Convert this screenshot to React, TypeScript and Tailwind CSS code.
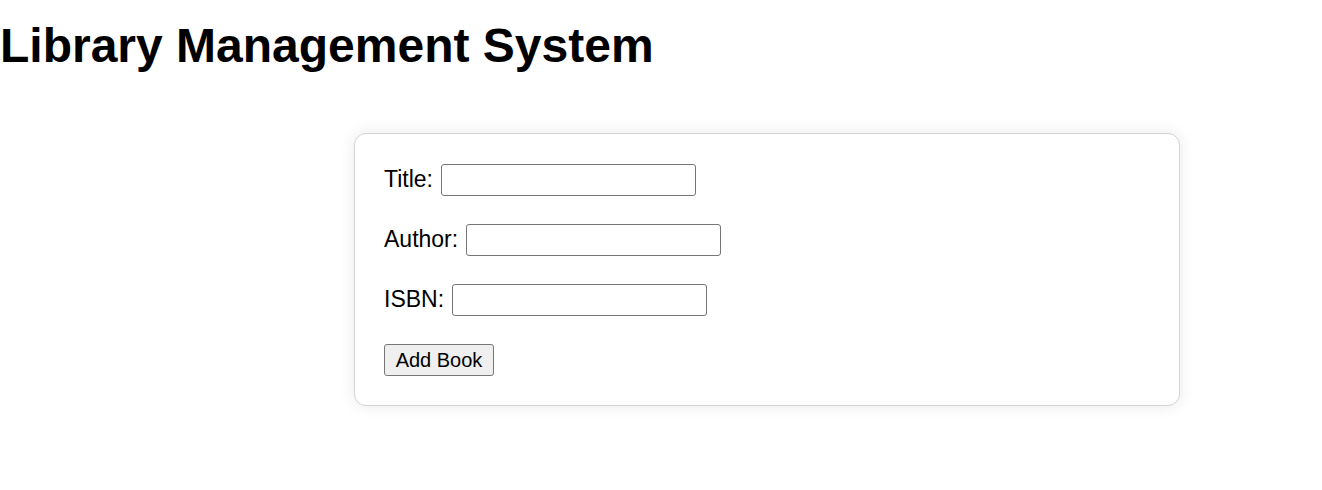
import { useState } from "react";

const fields = [
  { id: "title", label: "Title:" },
  { id: "author", label: "Author:" },
  { id: "isbn", label: "ISBN:" },
];

export default function App() {
  const [values, setValues] = useState<Record<string, string>>({
    title: "",
    author: "",
    isbn: "",
  });

  return (
    <div className="min-h-screen bg-white text-black font-['Liberation_Sans',Arial,sans-serif]">
      <h1 className="mt-[18px] text-[48px] leading-[56px] font-bold">
        Library Management System
      </h1>

      <form
        onSubmit={(e) => e.preventDefault()}
        className="ml-[354px] mt-[59px] w-[826px] rounded-[12px] border border-[#d4d4d4] bg-white px-[29px] pt-[30px] pb-[29px] shadow-[0_0_16px_rgba(0,0,0,0.09)] flex flex-col gap-[28px]"
      >
        {fields.map((f) => (
          <div key={f.id} className="flex items-start gap-[8px] h-[32px]">
            <label htmlFor={f.id} className="mt-[2px] text-[23px] leading-[26px]">
              {f.label}
            </label>
            <input
              id={f.id}
              type="text"
              value={values[f.id]}
              onChange={(e) =>
                setValues((v) => ({ ...v, [f.id]: e.target.value }))
              }
              className="w-[255px] h-[32px] rounded-[3px] border border-[#767676] bg-white px-[3px] text-[20px] outline-none"
            />
          </div>
        ))}

        <div>
          <button
            type="submit"
            className="w-[110px] h-[32px] rounded-[3px] border border-[#767676] bg-[#efefef] text-[20px] leading-none"
          >
            Add Book
          </button>
        </div>
      </form>
    </div>
  );
}
